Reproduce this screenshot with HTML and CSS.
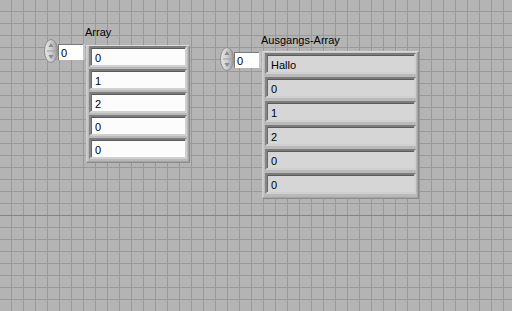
FILE: index.html
```html
<!DOCTYPE html>
<html lang="de">
<head>
  <meta charset="UTF-8">
  <title>Frontpanel</title>
  <link rel="stylesheet" href="styles.css">
</head>
<body>
  <div class="panel">
    <!-- Eingangs-Array -->
    <div class="ctl ctl-in">
      <div class="label">Array</div>
      <div class="row">
        <div class="index">
          <svg class="spin" width="14" height="24" viewBox="0 0 14 24">
            <defs>
              <linearGradient id="sg" x1="0" y1="0" x2="1" y2="0">
                <stop offset="0" stop-color="#e6e6e6"/>
                <stop offset="0.5" stop-color="#cfcfcf"/>
                <stop offset="1" stop-color="#9a9a9a"/>
              </linearGradient>
            </defs>
            <ellipse cx="7" cy="12" rx="6.5" ry="11.5" fill="url(#sg)" stroke="#8c8c8c"/>
            <path d="M7 4 L9.5 8 L4.5 8 Z" fill="#8a8a8a"/>
            <path d="M7 20 L9.5 16 L4.5 16 Z" fill="#8a8a8a"/>
            <line x1="3" y1="12" x2="11" y2="12" stroke="#9c9c9c"/>
          </svg>
          <div class="idx-box">0</div>
        </div>
        <div class="frame">
          <div class="slot"><div class="cell">0</div></div>
          <div class="slot"><div class="cell">1</div></div>
          <div class="slot"><div class="cell">2</div></div>
          <div class="slot"><div class="cell">0</div></div>
          <div class="slot"><div class="cell">0</div></div>
        </div>
      </div>
    </div>

    <!-- Ausgangs-Array (Anzeige) -->
    <div class="ctl ctl-out">
      <div class="label">Ausgangs-Array</div>
      <div class="row">
        <div class="index">
          <svg class="spin" width="14" height="24" viewBox="0 0 14 24">
            <ellipse cx="7" cy="12" rx="6.5" ry="11.5" fill="url(#sg)" stroke="#8c8c8c"/>
            <path d="M7 4 L9.5 8 L4.5 8 Z" fill="#8a8a8a"/>
            <path d="M7 20 L9.5 16 L4.5 16 Z" fill="#8a8a8a"/>
            <line x1="3" y1="12" x2="11" y2="12" stroke="#9c9c9c"/>
          </svg>
          <div class="idx-box">0</div>
        </div>
        <div class="frame">
          <div class="slot"><div class="cell">Hallo</div></div>
          <div class="slot"><div class="cell">0</div></div>
          <div class="slot"><div class="cell">1</div></div>
          <div class="slot"><div class="cell">2</div></div>
          <div class="slot"><div class="cell">0</div></div>
          <div class="slot"><div class="cell">0</div></div>
        </div>
      </div>
    </div>

    <div class="split"></div>
  </div>
</body>
</html>
```

FILE: styles.css
```css
body {
  margin: 0;
  font-family: "Liberation Sans", Arial, sans-serif;
  font-size: 11px;
  color: #000;
}
.panel {
  position: relative;
  width: 512px;
  height: 311px;
  overflow: hidden;
  background-color: #b4b4b4;
  background-image:
    linear-gradient(to right, #999 1px, transparent 1px),
    linear-gradient(to bottom, #999 1px, transparent 1px);
  background-size: 12px 12px;
  background-position: 11px 11px;
}
.split {
  position: absolute;
  left: 0;
  right: 0;
  top: 215px;
  height: 1px;
  background: #858585;
}

/* controls sit on the free front panel */
.ctl { position: absolute; }
.ctl-in { left: 44px; top: 26px; }
.ctl-out { left: 220px; top: 34px; }

.label {
  height: 13px;
  line-height: 13px;
  margin-left: 41px;
  white-space: nowrap;
}

.row {
  display: flex;
  align-items: flex-start;
}
.index {
  display: flex;
  align-items: flex-start;
  margin-right: 3px;
}
.spin { display: block; }
.idx-box {
  margin-top: 5px;
  width: 22px;
  height: 15px;
  padding-left: 2px;
  line-height: 16px;
  background: #fff;
  border-top: 1px solid #7a7a7a;
  border-left: 1px solid #7a7a7a;
  box-shadow: 2px 0 0 #c6c6c6;
}

.frame {
  margin-top: 6px;
  display: flex;
  flex-direction: column;
  background: #b9b9b9;
  border-top: 1px solid #dcdcdc;
  border-left: 1px solid #cfcfcf;
  border-right: 1px solid #8c8c8c;
  border-bottom: 1px solid #8c8c8c;
  box-shadow: inset -1px -1px 0 #a4a4a4, inset 1px 1px 0 #c8c8c8;
}
.slot {
  border-top: 2px solid #7c7c7c;
  border-left: 2px solid #858585;
  border-right: 2px solid #d0d0d0;
  border-bottom: 2px solid #d0d0d0;
}
.cell {
  height: 17px;
  line-height: 18px;
  padding-left: 3px;
  border-top: 1px solid #5a5a5a;
  border-left: 1px solid #6a6a6a;
  box-sizing: border-box;
  white-space: nowrap;
}

.ctl-in .frame { padding: 0 2px 3px 2px; gap: 2px; }
.ctl-in .cell { width: 94px; background: #fcfcfc; }
.ctl-out .frame { margin-top: 4px; padding: 1px 2px 4px 2px; gap: 3px; }
.ctl-out .cell { width: 147px; background: #d6d6d6; }
```
